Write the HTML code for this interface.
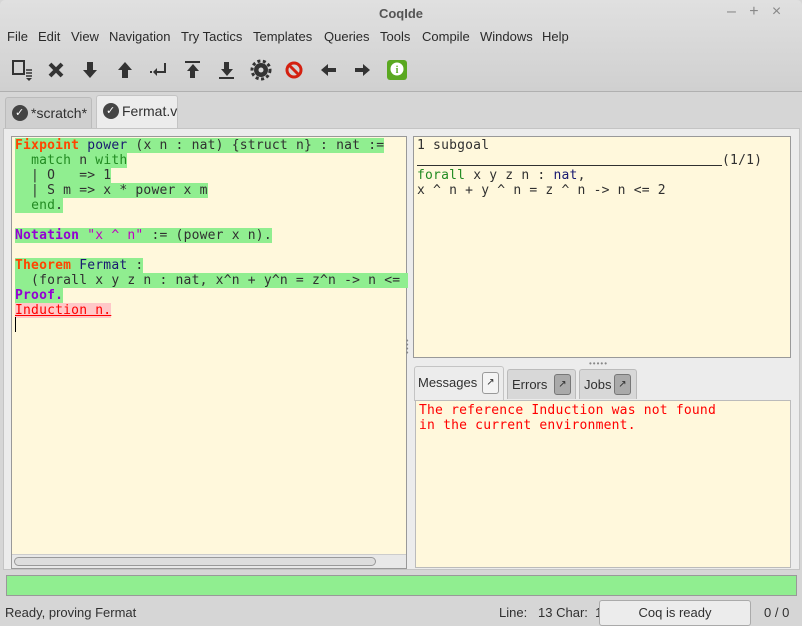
<!DOCTYPE html>
<html><head><style>
*{margin:0;padding:0;box-sizing:border-box}
body{width:802px;height:626px;overflow:hidden;background:#d6d6d6;font-family:"Liberation Sans","DejaVu Sans",sans-serif;font-size:13px;color:#303030;position:relative}
.a{position:absolute}
.mono{font-family:"DejaVu Sans Mono","Liberation Mono",monospace;font-size:13px;letter-spacing:0.2px;line-height:15px;white-space:pre}
.hl{background:#90ee90}
.kw{color:#ff4500;font-weight:bold}
.nm{color:#191970}
.tac{color:#228b22}
.nt{color:#9400d3;font-weight:bold}
.str{color:#c000c0}
.m{position:absolute;top:29px;color:#2a2a2a}
.ico{position:absolute;top:58px}
</style></head><body>
<div class="a" style="left:0;top:0;width:802px;height:92px;background:linear-gradient(#e0e0e0,#d0d0d0);border-bottom:1px solid #b0b0b0;border-radius:5px 5px 0 0"></div>
<div class="a" style="left:0;top:6px;width:802px;text-align:center;font-weight:bold;color:#555;font-size:13px">CoqIde</div>
<div class="a" style="left:727px;top:3px;color:#888;font-size:16px">–&nbsp;&nbsp;&nbsp;+&nbsp;&nbsp;&nbsp;×</div>
<span class="m" style="left:7px">File</span><span class="m" style="left:38px">Edit</span><span class="m" style="left:71px">View</span><span class="m" style="left:109px">Navigation</span><span class="m" style="left:181px">Try Tactics</span><span class="m" style="left:253px">Templates</span><span class="m" style="left:324px">Queries</span><span class="m" style="left:380px">Tools</span><span class="m" style="left:422px">Compile</span><span class="m" style="left:480px">Windows</span><span class="m" style="left:542px">Help</span>
<!-- toolbar icons -->
<svg class="ico" style="left:11px" width="24" height="24"><rect x="2" y="3" width="11" height="13" fill="none" stroke="#333" stroke-width="2"/><path d="M15 12h6M15 15h6M15 18h6" stroke="#333" stroke-width="1.5"/><path d="M15 20l3 3 3-3z" fill="#333"/></svg>
<svg class="ico" style="left:47px" width="20" height="24"><path d="M3 6l12 12M15 6L3 18" stroke="#333" stroke-width="4"/></svg>
<svg class="ico" style="left:81px" width="18" height="24"><path d="M6 4h6v8h4l-7 8-7-8h4z" fill="#333"/></svg>
<svg class="ico" style="left:116px" width="18" height="24"><path d="M6 20h6v-8h4l-7-8-7 8h4z" fill="#333"/></svg>
<svg class="ico" style="left:148px" width="22" height="24"><path d="M17 5v9h-8" stroke="#333" stroke-width="2" fill="none"/><path d="M9 10l-4 4 4 4z" fill="#333"/><rect x="2" y="13" width="2" height="2" fill="#333"/></svg>
<svg class="ico" style="left:183px" width="20" height="24"><rect x="2" y="3" width="15" height="2" fill="#333"/><path d="M7 20h5v-7h4l-6-7-6 7h3z" fill="#333"/></svg>
<svg class="ico" style="left:217px" width="20" height="24"><rect x="2" y="19" width="15" height="2" fill="#333"/><path d="M7 4h5v7h4l-6 7-6-7h3z" fill="#333"/></svg>
<svg class="ico" style="left:250px" width="22" height="24"><circle cx="11" cy="12" r="7" fill="#333"/><circle cx="11" cy="12" r="9" fill="none" stroke="#333" stroke-width="3" stroke-dasharray="3 2.5"/><circle cx="11" cy="12" r="2.5" fill="#d8d8d8"/></svg>
<svg class="ico" style="left:284px" width="22" height="24"><circle cx="10" cy="12" r="7" fill="none" stroke="#d42010" stroke-width="3"/><path d="M5 7l10 10" stroke="#d42010" stroke-width="3"/></svg>
<svg class="ico" style="left:319px" width="20" height="24"><path d="M2 12l7-6v4h8v4H9v4z" fill="#333"/></svg>
<svg class="ico" style="left:352px" width="20" height="24"><path d="M18 12l-7-6v4H3v4h8v4z" fill="#333"/></svg>
<svg class="ico" style="left:386px" width="22" height="24" ><rect x="1" y="2" width="20" height="20" rx="3" fill="#5aa820"/><circle cx="11" cy="11" r="6.5" fill="#fff"/><text x="11" y="15" font-size="10" font-weight="bold" text-anchor="middle" fill="#5aa820" font-family="Liberation Serif">i</text></svg>
<!-- tabs -->
<div class="a" style="left:5px;top:97px;width:87px;height:31px;background:#cfcfcf;border:1px solid #bbb;border-bottom:none;border-radius:3px 3px 0 0"></div>
<div class="a" style="left:12px;top:105px;width:16px;height:16px;border-radius:50%;background:#444"></div>
<div class="a" style="left:15px;top:106px;color:#fff;font-size:11px;font-weight:bold">✓</div>
<div class="a" style="left:31px;top:105px;font-size:14px">*scratch*</div>
<div class="a" style="left:96px;top:95px;width:82px;height:35px;background:#ececec;border:1px solid #c4c4c4;border-bottom:none;border-radius:3px 3px 0 0"></div>
<div class="a" style="left:103px;top:103px;width:16px;height:16px;border-radius:50%;background:#444"></div>
<div class="a" style="left:106px;top:104px;color:#fff;font-size:11px;font-weight:bold">✓</div>
<div class="a" style="left:122px;top:103px;font-size:14px">Fermat.v</div>
<div class="a" style="left:3px;top:128px;width:797px;height:442px;background:#ececec;border:1px solid #c4c4c4"></div>
<!-- editor -->
<div class="a" style="left:11px;top:136px;width:396px;height:433px;background:#fff8dc;border:1px solid #999"></div>
<div class="a mono" style="left:15px;top:138px"><span class="hl"><span class="kw">Fixpoint</span> <span class="nm">power</span> (x n : nat) {struct n} : nat :=</span>
<span class="hl">  <span class="tac">match</span> n <span class="tac">with</span></span>
<span class="hl">  | O   => 1</span>
<span class="hl">  | S m => x * power x m</span>
<span class="hl">  <span class="tac">end</span>.</span>

<span class="hl"><span class="nt">Notation</span> <span class="str">"x ^ n"</span> := (power x n).</span>

<span class="hl"><span class="kw">Theorem</span> <span class="nm">Fermat</span> :</span>
<span class="hl">  (forall x y z n : nat, x^n + y^n = z^n -> n <= </span>
<span class="hl"><span class="nt">Proof.</span></span>
<span style="background:#ffc8c8;color:#f00;text-decoration:underline">Induction n.</span></div>
<div class="a" style="left:15px;top:317px;width:1px;height:15px;background:#000"></div>
<div class="a" style="left:12px;top:554px;width:394px;height:14px;background:#e8e8e8;border-top:1px solid #ccc"></div>
<div class="a" style="left:14px;top:557px;width:362px;height:9px;background:#ddd;border:1px solid #999;border-radius:5px"></div>
<!-- goals -->
<div class="a" style="left:413px;top:136px;width:378px;height:222px;background:#fff8dc;border:1px solid #999"></div>
<div class="a mono" style="left:417px;top:138px">1 subgoal
<span style="text-decoration:underline">                                      </span>(1/1)
<span class="tac">forall</span> x y z n : <span class="nm">nat</span>,
x ^ n + y ^ n = z ^ n -> n <= 2</div>
<div class="a" style="left:589px;top:359px;color:#888;font-size:8px;letter-spacing:1px">•••••</div>
<div class="a" style="left:406px;top:340px;color:#888;font-size:7px;line-height:4px">•<br>•<br>•<br>•</div>
<!-- message tabs -->
<div class="a" style="left:414px;top:366px;width:90px;height:35px;background:#ececec;border:1px solid #c4c4c4;border-bottom:none;border-radius:3px 3px 0 0"></div>
<div class="a" style="left:418px;top:375px">Messages</div>
<div class="a" style="left:482px;top:372px;width:17px;height:22px;border:1px solid #999;border-radius:3px;background:#f4f4f4;font-size:10px;text-align:center;line-height:20px">↗</div>
<div class="a" style="left:507px;top:369px;width:69px;height:30px;background:#d8d8d8;border:1px solid #bbb;border-bottom:none;border-radius:3px 3px 0 0"></div>
<div class="a" style="left:512px;top:377px">Errors</div>
<div class="a" style="left:554px;top:374px;width:17px;height:21px;border:1px solid #777;border-radius:3px;background:#aaa;font-size:10px;text-align:center;line-height:19px">↗</div>
<div class="a" style="left:579px;top:369px;width:58px;height:30px;background:#d8d8d8;border:1px solid #bbb;border-bottom:none;border-radius:3px 3px 0 0"></div>
<div class="a" style="left:584px;top:377px">Jobs</div>
<div class="a" style="left:614px;top:374px;width:17px;height:21px;border:1px solid #777;border-radius:3px;background:#aaa;font-size:10px;text-align:center;line-height:19px">↗</div>
<div class="a" style="left:415px;top:400px;width:376px;height:168px;background:#fff8dc;border:1px solid #bbb"></div>
<div class="a mono" style="left:419px;top:403px;color:#f00">The reference Induction was not found
in the current environment.</div>
<!-- green bar -->
<div class="a" style="left:6px;top:575px;width:791px;height:21px;background:#90ee90;border:1px solid #999"></div>
<!-- status -->
<div class="a" style="left:5px;top:605px">Ready, proving Fermat</div>
<div class="a" style="left:499px;top:605px">Line:&nbsp;&nbsp; 13 Char:&nbsp; 1</div>
<div class="a" style="left:599px;top:600px;width:152px;height:26px;background:#ececec;border:1px solid #aaa;border-radius:3px;text-align:center;line-height:24px">Coq is ready</div>
<div class="a" style="left:764px;top:605px">0 / 0</div>
</body></html>
